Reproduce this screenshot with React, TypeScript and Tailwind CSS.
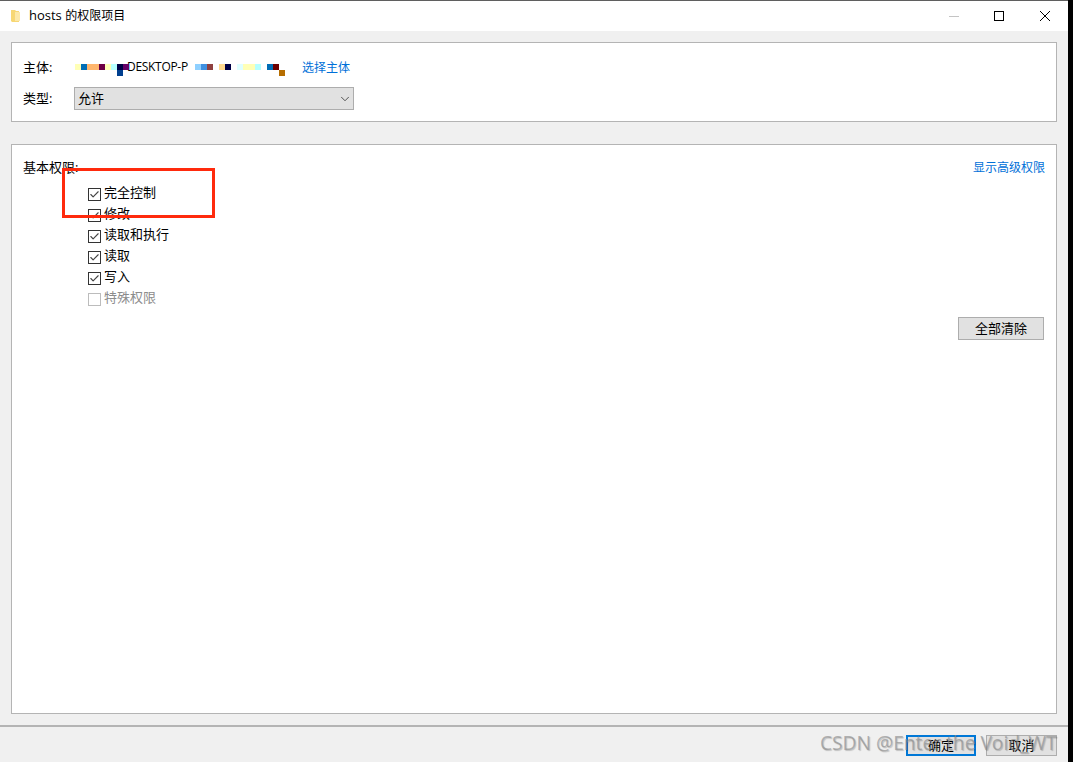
import { Check, ChevronDown } from 'lucide-react';

const FONT = "font-['Open_Sans','Noto_Sans_CJK_SC',sans-serif]";

const leftBlocks = [
  ['#ffffb6', 0, 0], ['#006db6', 6, 0], ['#ffb66d', 12, 0], ['#ffb66d', 18, 0], ['#6d0045', 24, 0],
  ['#ffffb6', 30, 0], ['#b6ffff', 36, 0], ['#000045', 42, 0], ['#660066', 48, 0], ['#003f8f', 42, 6],
] as const;

const rightBlocks = [
  ['#8fd0ff', 0, 0], ['#4090e0', 6, 0], ['#8f4040', 12, 0], ['#ffd98f', 24, 0], ['#000045', 30, 0],
  ['#dfffff', 42, 0], ['#ffffb6', 48, 0], ['#ffffb6', 54, 0], ['#b6ffff', 60, 0], ['#006db6', 72, 0],
  ['#6d0000', 78, 0], ['#b66d00', 84, 6],
] as const;

const Mosaic = ({ blocks, width }: { blocks: readonly (readonly [string, number, number])[]; width: number }) => (
  <svg width={width} height={12} className="relative z-10 shrink-0">
    {blocks.map(([fill, x, y]) => (
      <rect key={`${x}-${y}`} x={x} y={y} width={6} height={6} fill={fill} />
    ))}
  </svg>
);

const permissions = ['完全控制', '修改', '读取和执行', '读取', '写入'];

const PermissionRow = ({ label, disabled }: { label: string; disabled?: boolean }) => (
  <div className="flex h-[21px] items-center">
    <span
      className={`flex h-[13px] w-[13px] items-center justify-center border ${
        disabled ? 'border-[#bcbcbc]' : 'border-[#333333]'
      } bg-white`}
    >
      {!disabled && <Check size={11} strokeWidth={2.4} className="text-[#444444]" />}
    </span>
    <span className={`ml-[3px] pb-[3px] text-[13px] ${disabled ? 'text-[#8c8c8c]' : 'text-black'}`}>{label}</span>
  </div>
);

export default function App() {
  return (
    <div className={`relative flex h-[762px] w-[1073px] bg-black ${FONT}`}>
      <div className="flex h-full w-[1068px] flex-col border-t border-[#5f5f5f] bg-[#f0f0f0]">
        {/* title bar */}
        <div className="flex h-[30px] items-center bg-white pl-[11px]">
          <svg width={10} height={14} viewBox="0 0 10 14" className="shrink-0">
            <path d="M0 1h4l1 1h3v11H1l-1-1z" fill="#f7d774" />
            <path d="M4 3h5v9H4z" fill="#fce8a8" />
          </svg>
          <span className="ml-[8px] text-[12px] text-black">
            <span className="text-[13px]">hosts </span>的权限项目
          </span>
          <div className="ml-auto flex items-center">
            <svg width={10} height={10} viewBox="0 0 10 10" className="shrink-0">
              <path d="M0 5.5h10" stroke="#c4c4c4" strokeWidth={1} />
            </svg>
            <svg width={10} height={10} viewBox="0 0 10 10" className="ml-[35px] shrink-0">
              <rect x={0.5} y={0.5} width={9} height={9} fill="none" stroke="#000000" strokeWidth={1} />
            </svg>
            <svg width={10} height={10} viewBox="0 0 10 10" className="ml-[36px] mr-[18px] shrink-0">
              <path d="M0 0l10 10M10 0L0 10" stroke="#000000" strokeWidth={1} />
            </svg>
          </div>
        </div>

        <div className="flex min-h-0 flex-1 flex-col px-[11px] pt-[11px]">
          {/* principal panel */}
          <div className="h-[80px] w-[1046px] border border-[#b4b4b4] bg-white pl-[11px] pt-[13px]">
            <div className="flex h-[24px] items-center text-[12px]">
              <span className="w-[51px] text-[13px] text-black">主体:</span>
              <div className="ml-[1px] mt-[4px] flex">
                <Mosaic blocks={leftBlocks} width={54} />
                <span className="-mt-[6px] w-[60px] whitespace-nowrap text-[12px] leading-[18px] tracking-[-0.3px] text-black">
                  <span className="-ml-[2px] inline-block">DESKTOP-P</span>
                </span>
                <div className="ml-[6px]">
                  <Mosaic blocks={rightBlocks} width={90} />
                </div>
              </div>
              <span className="ml-[17px] text-[#0070d8]">选择主体</span>
            </div>
            <div className="mt-[7px] flex h-[23px] items-center">
              <span className="w-[51px] text-[13px] text-black">类型:</span>
              <div className="flex h-[23px] w-[280px] items-center justify-between border border-[#adadad] bg-[#e1e1e1] pl-[3px] pr-[1px]">
                <span className="text-[13px] text-black">允许</span>
                <ChevronDown size={14} strokeWidth={1.4} className="text-[#333333]" />
              </div>
            </div>
          </div>

          {/* permissions panel */}
          <div className="mt-[22px] flex h-[570px] w-[1046px] flex-col border border-[#b4b4b4] bg-white pl-[11px] pr-[11px] pt-[13px]">
            <div className="flex items-center justify-between">
              <span className="text-[13px] text-black">基本权限:</span>
              <span className="text-[12px] text-[#0070d8]">显示高级权限</span>
            </div>
            <div className="mt-[6.5px] pl-[65px]">
              {permissions.map((label) => (
                <PermissionRow key={label} label={label} />
              ))}
              <PermissionRow label="特殊权限" disabled />
            </div>
            <div className="mt-[7px] flex justify-end pr-[1px]">
              <button className="h-[23px] w-[86px] border border-[#adadad] bg-[#e1e1e1] text-[13px] text-black">
                全部清除
              </button>
            </div>
          </div>
        </div>

        {/* footer */}
        <div className="flex h-[37px] justify-end border-t-2 border-[#b4b4b4] pr-[11px] pt-[8px]">
          <button className="h-[21px] w-[70px] border-2 border-[#0078d7] bg-[#e1e1e1] text-[13px] leading-none text-black">
            确定
          </button>
          <button className="ml-[10px] h-[21px] w-[71px] border border-[#adadad] bg-[#e1e1e1] text-[13px] leading-none text-black">
            取消
          </button>
        </div>
      </div>

      {/* annotation and watermark */}
      <div className="absolute left-[62px] top-[168px] h-[50px] w-[153px] border-[3px] border-[#ff2a0d]" />
      <span className="absolute left-[820px] top-[730px] text-[19.2px] leading-[26px] text-[#8c8c8c]/65 [text-shadow:1px_1px_1px_rgba(0,0,0,0.2)]">
        CSDN @Enter the Void_WT
      </span>
    </div>
  );
}
